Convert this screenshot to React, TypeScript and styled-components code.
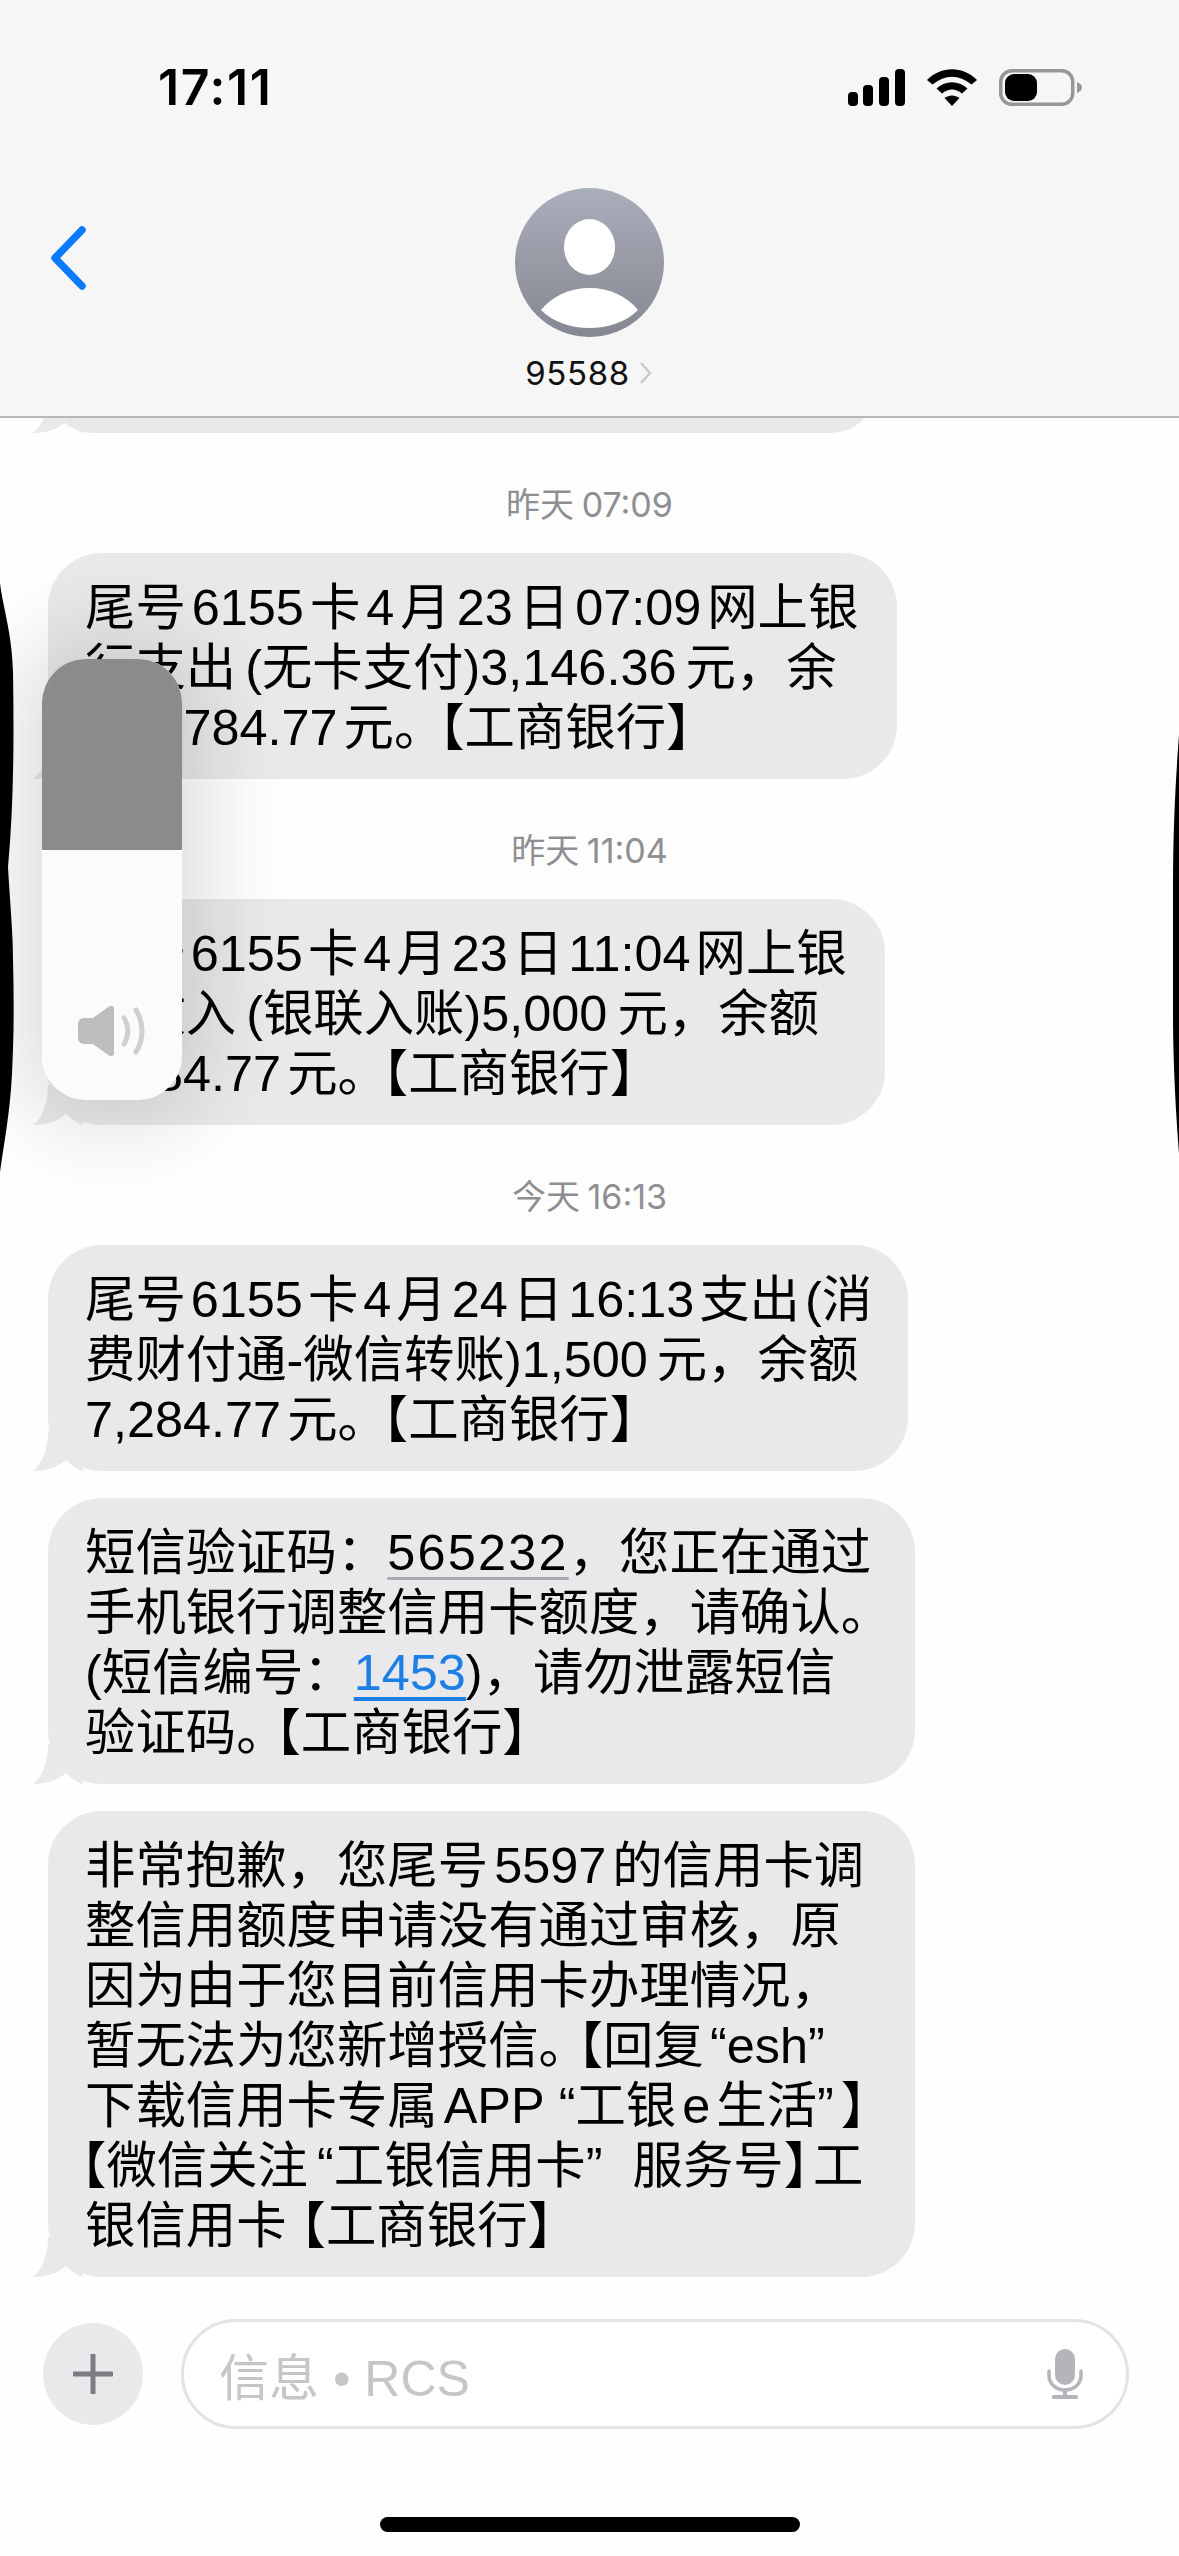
import React from "react";
import styled, { createGlobalStyle } from "styled-components";

const Global = createGlobalStyle`
  html, body { margin: 0; padding: 0; background: #fefefe; }
`;

const Screen = styled.div`
  position: relative;
  width: 1179px;
  height: 2556px;
  overflow: hidden;
  display: flex;
  flex-direction: column;
  background: #fefefe;
  font-family: "Liberation Sans", "Noto Sans CJK SC", sans-serif;
`;

const Header = styled.header`
  position: relative;
  z-index: 2;
  box-sizing: border-box;
  height: 418px;
  flex: none;
  padding-top: 69px;
  background: #f6f6f6;
  border-bottom: 2px solid #b8b8b8;
`;

const StatusBar = styled.div`
  display: flex;
  align-items: center;
  justify-content: space-between;
  height: 37px;
  padding: 0 97px 0 158px;
`;

const Clock = styled.span`
  font-family: Inter, "Liberation Sans", sans-serif;
  font-size: 50px;
  font-weight: 600;
  letter-spacing: 1.6px;
  line-height: 37px;
  color: #000;
`;

const StatusIcons = styled.div`
  display: flex;
  align-items: center;
  gap: 22px;
`;

const Nav = styled.div`
  display: grid;
  grid-template-columns: 1fr auto 1fr;
  margin-top: 82px;
`;

const BackIcon = styled.svg`
  display: block;
  width: 36px;
  height: 64px;
  margin: 38px 0 0 50px;
`;

const Contact = styled.div`
  display: flex;
  flex-direction: column;
  align-items: center;
`;

const AvatarIcon = styled.svg`
  display: block;
  width: 149px;
  height: 149px;
`;

const ContactName = styled.div`
  display: flex;
  align-items: center;
  gap: 9px;
  margin: 21px 0 0 -2px;
  font-family: Inter, "Liberation Sans", sans-serif;
  font-size: 33px;
  letter-spacing: 0.6px;
  line-height: 30px;
  color: #111;
`;

const Thread = styled.main`
  flex: 1;
  overflow: hidden;
  display: flex;
  flex-direction: column;
`;

const Bubble = styled.div<{ $width: number; $clipped?: boolean }>`
  position: relative;
  flex: none;
  box-sizing: border-box;
  width: ${(p) => p.$width}px;
  margin-left: 48px;
  padding: 25px 0 21px 37px;
  border-radius: 54px;
  background: #e9e9eb;
  font-size: 50.4px;
  line-height: 60px;
  color: #000;
  ${(p) => (p.$clipped ? "height: 90px; margin-top: -75px;" : "")}
  & + & { margin-top: 27px; }
`;

const Tail = styled.svg`
  position: absolute;
  left: -15px;
  bottom: 0;
  width: 50px;
  height: 40px;
`;

const Line = styled.div<{ $outdent?: number; $gap?: number }>`
  white-space: nowrap;
  margin-left: ${(p) => -(p.$outdent ?? 0)}px;
  word-spacing: ${(p) => p.$gap ?? -8}px;
`;

const OpenBracket = styled.span<{ $trim?: number }>`
  margin-left: ${(p) => -(p.$trim ?? 5)}px;
`;

const CloseBracket = styled.span<{ $half?: boolean; $pad?: number }>`
  margin: 0 ${(p) => (p.$half ? 4 : 0)}px 0 ${(p) => p.$pad ?? 0}px;
  font-feature-settings: ${(p) => (p.$half ? '"halt"' : "normal")};
`;

const Quoted = styled.span<{ $after?: number }>`
  margin: 0 ${(p) => p.$after ?? 9}px 0 9px;
`;

const Code = styled.span`
  letter-spacing: 2.2px;
  text-decoration: underline;
  text-decoration-color: #a9a9ae;
  text-decoration-thickness: 3px;
  text-underline-offset: 7px;
`;

const Link = styled.span`
  color: #1c7fe6;
  text-decoration: underline;
  text-decoration-thickness: 4px;
  text-underline-offset: 7px;
`;

const TimeLabel = styled.div`
  flex: none;
  height: 40px;
  margin: 52px 0 28px;
  text-align: center;
  font-family: Inter, "Noto Sans CJK SC", sans-serif;
  font-size: 34px;
  line-height: 40px;
  word-spacing: -2px;
  color: #8e8e93;
`;

const Composer = styled.div`
  flex: none;
  display: flex;
  align-items: center;
  gap: 38px;
  height: 110px;
  padding: 0 50px 0 43px;
`;

const PlusButton = styled.div`
  flex: none;
  display: flex;
  align-items: center;
  justify-content: center;
  width: 100px;
  height: 102px;
  border-radius: 50%;
  background: #e9e9eb;
`;

const PlusIcon = styled.svg`
  width: 40px;
  height: 40px;
`;

const Field = styled.div`
  flex: 1;
  box-sizing: border-box;
  height: 110px;
  display: flex;
  align-items: center;
  justify-content: space-between;
  padding: 0 43px 0 35px;
  border: 3px solid #e3e3e4;
  border-radius: 55px;
  background: #fff;
`;

const Placeholder = styled.span`
  font-size: 50px;
  color: #c6c6c8;
`;

const MicIcon = styled.svg`
  display: block;
  width: 36px;
  height: 50px;
`;

const HomeRow = styled.div`
  flex: none;
  display: flex;
  justify-content: center;
  padding: 88px 0 24px;
`;

const HomeBar = styled.div`
  width: 420px;
  height: 15px;
  border-radius: 8px;
  background: #000;
`;

const VolumeHud = styled.div`
  position: absolute;
  z-index: 3;
  left: 42px;
  top: 659px;
  width: 140px;
  height: 441px;
  display: flex;
  flex-direction: column;
  border-radius: 44px;
  overflow: hidden;
  background: #fbfbfd;
`;

const VolumeShadow = styled.div`
  position: absolute;
  z-index: 3;
  left: 42px;
  top: 659px;
  width: 140px;
  height: 441px;
  border-radius: 44px;
  box-shadow: 0 0 90px 20px rgba(0, 0, 0, 0.14);
`;

const VolumeFill = styled.div`
  flex: none;
  height: 191px;
  background: #8b8b8c;
`;

const VolumeIconSlot = styled.div`
  flex: 1;
  display: flex;
  align-items: flex-start;
  padding: 155px 0 0 36px;
`;

const SpeakerIcon = styled.svg`
  display: block;
  width: 68px;
  height: 52px;
`;

const LeftEdge = styled.svg`
  position: absolute;
  z-index: 4;
  left: 0;
  top: 583px;
  width: 16px;
  height: 589px;
`;

const RightEdge = styled.svg`
  position: absolute;
  z-index: 4;
  right: 0;
  top: 735px;
  width: 6px;
  height: 419px;
`;

const BubbleTail = () => (
  <Tail viewBox="0 0 50 40">
    <path d="M15 0C15 20 8 34 0 40C10 40 22 38 33 29C38 34 44 38 50 40L50 0Z" fill="#e9e9eb" />
  </Tail>
);

export default function App() {
  return (
    <Screen>
      <Global />
      <Header>
        <StatusBar>
          <Clock>17:11</Clock>
          <StatusIcons>
            <svg width="57" height="37" viewBox="0 0 57 37" fill="#000">
              <rect x="0" y="23" width="10" height="14" rx="4" />
              <rect x="15" y="16" width="10" height="21" rx="4" />
              <rect x="31" y="8" width="10" height="29" rx="4" />
              <rect x="47" y="0" width="10" height="37" rx="4" />
            </svg>
            <svg width="50" height="37" viewBox="0 0 50 37" fill="#000">
              <path d="M0 11C14-3.5 36-3.5 50 11L44.500 15.500C32 5 18 5 5.500 15.500Z" />
              <path d="M9.500 19.500C19 11 31 11 40.500 19.500L35 24.500C28 19 22 19 15 24.500Z" />
              <path d="M17.500 29C22 25.500 28 25.500 32.500 29L25 37Z" />
            </svg>
            <svg width="83" height="37" viewBox="0 0 83 37">
              <rect x="1.750" y="1.750" width="72" height="33.500" rx="11" fill="none" stroke="#979797" strokeWidth="3.500" />
              <rect x="6" y="5" width="32" height="27" rx="9" fill="#000" />
              <path d="M78 13C81 14 83 16 83 18.500C83 21 81 23 78 24Z" fill="#979797" />
            </svg>
          </StatusIcons>
        </StatusBar>
        <Nav>
          <BackIcon viewBox="0 0 36 64">
            <path d="M32 4L5 32L32 60" fill="none" stroke="#0a7aff" strokeWidth="7.500" strokeLinecap="round" strokeLinejoin="round" />
          </BackIcon>
          <Contact>
            <AvatarIcon viewBox="0 0 149 149">
              <defs>
                <linearGradient id="avatarFill" x1="0" y1="0" x2="0" y2="1">
                  <stop offset="0" stopColor="#aaaeba" />
                  <stop offset="1" stopColor="#858892" />
                </linearGradient>
              </defs>
              <circle cx="74.500" cy="74.500" r="74.500" fill="url(#avatarFill)" />
              <ellipse cx="74.500" cy="59" rx="25.500" ry="28" fill="#fff" />
              <path d="M26 122C37 108 55 100 74.500 100C94 100 112 108 123 122C111 134 93 140 74.500 140C56 140 38 134 26 122Z" fill="#fff" />
            </AvatarIcon>
            <ContactName>
              <span>95588</span>
              <svg width="13" height="24" viewBox="0 0 13 24">
                <path d="M2 2L11 12L2 22" fill="none" stroke="#c9c9cb" strokeWidth="2.500" />
              </svg>
            </ContactName>
          </Contact>
          <div />
        </Nav>
      </Header>

      <Thread>
        <Bubble $width={828} $clipped>
          <BubbleTail />
        </Bubble>

        <TimeLabel>昨天 07:09</TimeLabel>
        <Bubble $width={849}>
          <Line>尾号 6155 卡 4 月 23 日 07:09 网上银</Line>
          <Line $gap={-5}>行支出 (无卡支付)3,146.36 元，余</Line>
          <Line>额 3,784.77 元。<OpenBracket>【工商银行】</OpenBracket></Line>
          <BubbleTail />
        </Bubble>

        <TimeLabel>昨天 11:04</TimeLabel>
        <Bubble $width={837}>
          <Line $gap={-9}>尾号 6155 卡 4 月 23 日 11:04 网上银</Line>
          <Line $gap={-4}>行收入 (银联入账)5,000 元，余额</Line>
          <Line>8,784.77 元。<OpenBracket>【工商银行】</OpenBracket></Line>
          <BubbleTail />
        </Bubble>

        <TimeLabel>今天 16:13</TimeLabel>
        <Bubble $width={860}>
          <Line $gap={-9}>尾号 6155 卡 4 月 24 日 16:13 支出 (消</Line>
          <Line $gap={-5}>费财付通-微信转账)1,500 元，余额</Line>
          <Line>7,284.77 元。<OpenBracket>【工商银行】</OpenBracket></Line>
          <BubbleTail />
        </Bubble>
        <Bubble $width={867}>
          <Line>短信验证码：<Code>565232</Code>，您正在通过</Line>
          <Line>手机银行调整信用卡额度，请确认。</Line>
          <Line>(短信编号：<Link>1453</Link>)，请勿泄露短信</Line>
          <Line>验证码。<OpenBracket $trim={11}>【工商银行】</OpenBracket></Line>
          <BubbleTail />
        </Bubble>
        <Bubble $width={867}>
          <Line>非常抱歉，您尾号 5597 的信用卡调</Line>
          <Line>整信用额度申请没有通过审核，原</Line>
          <Line>因为由于您目前信用卡办理情况，</Line>
          <Line>暂无法为您新增授信。<OpenBracket $trim={11}>【回复 “esh”</OpenBracket></Line>
          <Line>下载信用卡专属 APP <Quoted>“工银 e 生活”</Quoted><CloseBracket $pad={-2}>】</CloseBracket></Line>
          <Line $outdent={29}>【微信关注<Quoted $after={30}>“工银信用卡”</Quoted>服务号<CloseBracket $half>】</CloseBracket>工</Line>
          <Line>银信用卡<OpenBracket $trim={11}>【工商银行】</OpenBracket></Line>
          <BubbleTail />
        </Bubble>
      </Thread>

      <Composer>
        <PlusButton>
          <PlusIcon viewBox="0 0 40 40">
            <path d="M20 1V39M1 20H39" stroke="#7c7c81" strokeWidth="5" strokeLinecap="round" fill="none" />
          </PlusIcon>
        </PlusButton>
        <Field>
          <Placeholder>信息 • RCS</Placeholder>
          <MicIcon viewBox="0 0 36 50">
            <rect x="8" y="0" width="20" height="36" rx="10" fill="#b3b5ba" />
            <path d="M2 22V26C2 35 9 41 18 41C27 41 34 35 34 26V22" fill="none" stroke="#b3b5ba" strokeWidth="3.500" strokeLinecap="round" />
            <path d="M18 41V47" stroke="#b3b5ba" strokeWidth="4" />
            <rect x="5" y="46" width="26" height="4" rx="1.500" fill="#b3b5ba" />
          </MicIcon>
        </Field>
      </Composer>

      <HomeRow>
        <HomeBar />
      </HomeRow>

      <VolumeShadow />
      <VolumeHud>
        <VolumeFill />
        <VolumeIconSlot>
          <SpeakerIcon viewBox="0 0 68 52">
            <path d="M6 13H15L31 1.500C33 0 36 1 36 4V48C36 51 33 52 31 50.500L15 39H6C2.500 39 0 36 0 33V19C0 16 2.500 13 6 13Z" fill="#bdbdbf" />
            <path d="M46 13C51 21 51 31 46 39" fill="none" stroke="#cfcfd1" strokeWidth="5" strokeLinecap="round" />
            <path d="M58 5C66 18 66 34 58 47" fill="none" stroke="#cfcfd1" strokeWidth="5" strokeLinecap="round" />
          </SpeakerIcon>
        </VolumeIconSlot>
      </VolumeHud>

      <LeftEdge viewBox="0 0 16 589">
        <path d="M0 0C3 25 12 50 13 89C14 150 14 220 8 284C10 320 13 350 13 376C14 420 14 450 12 491C10 530 4 560 0 589Z" fill="#000" />
      </LeftEdge>
      <RightEdge viewBox="0 0 6 419">
        <path d="M6 0C3 40 0 90 0 150L0 280C0 330 3 380 6 419Z" fill="#000" />
      </RightEdge>
    </Screen>
  );
}
